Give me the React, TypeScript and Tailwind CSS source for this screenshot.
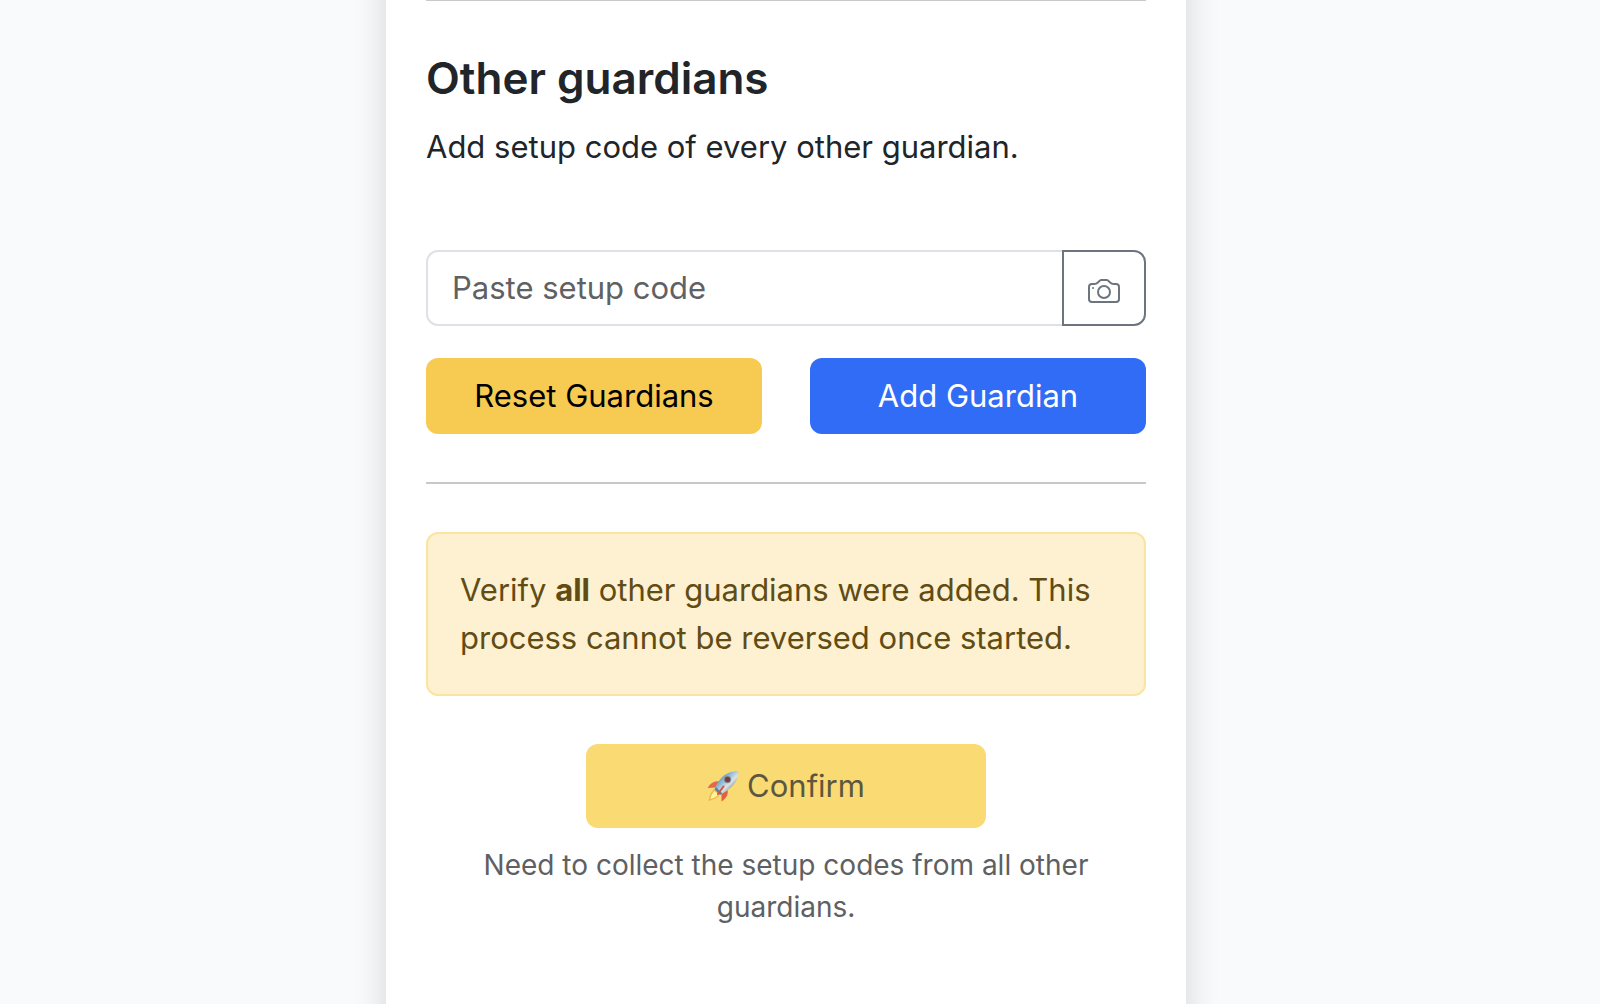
import React from 'react'
import { BsCamera } from 'react-icons/bs'

function Rocket() {
  return (
    <svg
      viewBox="0 0 32 32"
      className="w-8 h-8 shrink-0"
      aria-hidden="true"
    >
      <defs>
        <linearGradient id="hull" x1="0.25" y1="0.25" x2="0.75" y2="0.75">
          <stop offset="0" stopColor="#5c9bd0" />
          <stop offset="0.4" stopColor="#a9c6dc" />
          <stop offset="0.65" stopColor="#dde3e4" />
          <stop offset="1" stopColor="#8496a5" />
        </linearGradient>
      </defs>
      <path d="M12 11.5C7.500 10.500 3.500 13 0.500 18L8.500 17.500Z" fill="#e06a4a" />
      <path d="M20.500 20C21.500 24 19.500 28 14.500 31.500L14.500 24Z" fill="#e0603f" />
      <path d="M7 19.500C3.500 22 2.500 26 1.500 31C6 29.500 10 28.500 12.500 25Z" fill="#efb94a" />
      <path d="M7.500 21C5 23 4 26 3.500 29C7 28 9.500 26.500 11.500 24.500Z" fill="#fbf3a0" />
      <path d="M31.500 1C23 1 15.500 5 11.500 11.500L7.500 19L13 25L20 20.500C27 16 31.500 9.500 31.500 1Z" fill="url(#hull)" />
      <path d="M9 17L15.500 23.500L13 25L7.500 19.500Z" fill="#6b7f99" />
      <circle cx="20.500" cy="9.500" r="3.700" fill="#8b8f98" />
      <circle cx="20.500" cy="9.500" r="2.700" fill="#783f42" />
      <path d="M16.500 16.500L11 24" stroke="#d0553a" strokeWidth="2" strokeLinecap="round" />
    </svg>
  )
}

export default function App() {
  return (
    <div className="flex justify-center min-h-screen pr-7 overflow-hidden bg-[#f8fafc] font-['Inter',sans-serif] text-[31px] leading-[48px] text-[#212529]">
      {/* the card runs past both window edges so its shadow never fades out */}
      <main className="w-full max-w-[800px] -my-12 px-10 py-12 bg-white shadow-[0_0_32px_rgba(0,0,0,0.15)]">
        <hr className="border-t border-[#c7c8c9]" />

        <section className="pt-12">
          <h2 className="mb-4 text-[44px] leading-[58px] font-semibold">
            Other guardians
          </h2>
          <p>Add setup code of every other guardian.</p>

          <form className="mt-[79px]" onSubmit={(e) => e.preventDefault()}>
            <div className="flex h-[76px]">
              <input
                type="text"
                aria-label="Setup code"
                placeholder="Paste setup code"
                className="flex-1 min-w-0 px-6 border-2 border-[#dee2e6] rounded-l-xl bg-white placeholder:text-[#5f6163]"
              />
              <button
                type="button"
                aria-label="Scan setup code"
                className="-ml-0.5 px-6 border-2 border-[#6c757d] rounded-r-xl text-[#6c757d]"
              >
                <BsCamera size={32} className="inline-block align-[-8px]" />
              </button>
            </div>

            <div className="grid grid-cols-2 gap-12 mt-8">
              <button type="button" className="h-[76px] rounded-xl bg-[#f7ca52] text-black">
                Reset Guardians
              </button>
              <button type="submit" className="h-[76px] rounded-xl bg-[#316cf6] text-white">
                Add Guardian
              </button>
            </div>
          </form>
        </section>

        <hr className="my-12 border-t-2 border-[#c7c8c9]" />

        <div
          role="alert"
          className="p-8 border-2 border-[#f9e5a0] rounded-xl bg-[#fdf1d1] text-[#614c14]"
        >
          Verify <b>all</b> other guardians were added. This process cannot be
          reversed once started.
        </div>

        <div className="flex flex-col items-center mt-12">
          <button
            type="button"
            disabled
            className="flex items-center justify-center gap-2 w-[400px] h-[84px] rounded-xl bg-[#f9da73] text-[#5c573f]"
          >
            <Rocket />
            Confirm
          </button>
          <p className="mt-4 px-12 text-[28px] leading-[42px] text-center text-[#5e6062]">
            Need to collect the setup codes from all other guardians.
          </p>
        </div>
      </main>
    </div>
  )
}
